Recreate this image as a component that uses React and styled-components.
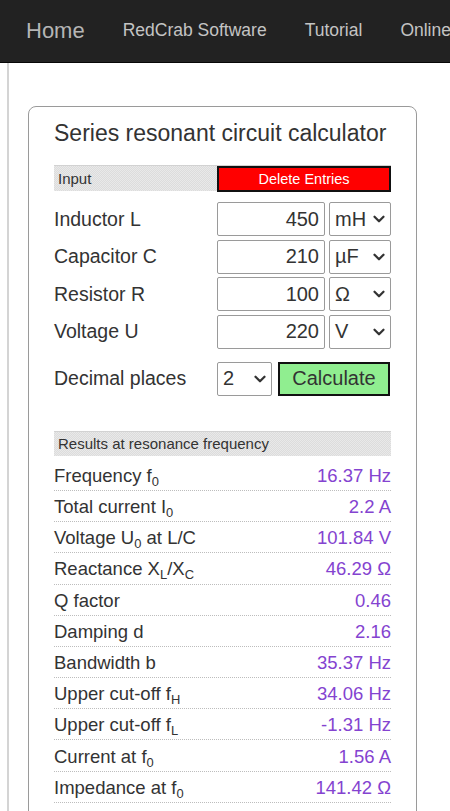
import React from 'react'
import styled, { createGlobalStyle } from 'styled-components'
import { ChevronDown } from 'lucide-react'

const GlobalStyle = createGlobalStyle`
  html, body {
    margin: 0;
    padding: 0;
    background: #fff;
    font-family: "Liberation Sans", Arial, sans-serif;
    color: #333;
  }
  * { box-sizing: border-box; }
`

const Nav = styled.nav`
  height: 63px;
  background: #222;
  border-bottom: 1px solid #080808;
  display: flex;
  align-items: center;
  gap: 38px;
  padding-left: 26px;
  overflow: hidden;
  white-space: nowrap;
`

const NavItem = styled.span`
  color: ${(p) => (p.$brand ? '#b5b5b5' : '#c4c4c4')};
  font-size: ${(p) => (p.$brand ? '22px' : '17.5px')};
  padding-bottom: 1px;
`

const Page = styled.div`
  margin-left: 7px;
  border-left: 2px solid #d4d4d4;
  padding: 43px 0 0 19px;
  min-height: 748px;
`

const Card = styled.div`
  width: 389px;
  border: 1px solid #9a9a9a;
  border-radius: 8px;
  padding: 12px 25px 40px 25px;
`

const Title = styled.h1`
  margin: 0 0 18px 0;
  font-size: 23px;
  font-weight: normal;
  line-height: 28px;
  color: #333;
  white-space: nowrap;
`

const SectionBar = styled.div`
  display: flex;
  align-items: center;
  height: ${(p) => p.$h || '26px'};
  background-color: #e3e3e3;
  background-image: repeating-conic-gradient(#dcdcdc 0 25%, #e9e9e9 0 50%);
  background-size: 2px 2px;
  border-top: 1px solid #d2d2d2;
  font-size: 15px;
  color: #333;
  margin-bottom: ${(p) => p.$mb || '0'};
  white-space: nowrap;
`

const BarLabel = styled.span`
  width: 163px;
  padding-left: 4px;
`

const DeleteButton = styled.button`
  flex: 1;
  height: 26px;
  background: #ff0000;
  border: 2px solid #111;
  color: #fff;
  font-family: inherit;
  font-size: 14.5px;
  padding: 0;
`

const InputGrid = styled.div`
  display: flex;
  flex-direction: column;
  gap: 3.6px;
  margin-top: 11px;
`

const InputRow = styled.div`
  display: grid;
  grid-template-columns: 159px 108px 62px;
  column-gap: 4px;
  align-items: center;
  height: 34px;
`

const Label = styled.span`
  font-size: 19.5px;
  color: #333;
`

const NumberInput = styled.input`
  height: 34px;
  width: 100%;
  border: 1px solid #9a9a9a;
  border-radius: 2px;
  text-align: right;
  font-family: inherit;
  font-size: 20px;
  color: #333;
  padding: 0 5px 0 4px;
`

const SelectBox = styled.div`
  height: 34px;
  border: 1px solid #9a9a9a;
  border-radius: 2px;
  display: flex;
  align-items: center;
  justify-content: space-between;
  padding: 0 2px 0 5px;
  font-size: 20px;
  color: #333;
  background: #fff;
`

const DecimalRow = styled.div`
  display: grid;
  grid-template-columns: 163px 55px 1fr;
  align-items: center;
  height: 34px;
  margin-top: 13px;
  margin-bottom: 35px;
`

const CalcButton = styled.button`
  height: 34px;
  margin-left: 6px;
  margin-right: 1px;
  background: #90ee90;
  border: 2px solid #111;
  font-family: inherit;
  font-size: 20px;
  color: #333;
  padding: 0;
`

const ResultRow = styled.div`
  display: flex;
  justify-content: space-between;
  align-items: center;
  height: 31.2px;
  border-bottom: 1px dotted #bdbdbd;
  font-size: 18.5px;
  padding-top: 2px;
`

const ResultLabel = styled.span`
  color: #333;
`

const ResultValue = styled.span`
  color: #8443d0;
`

const Sub = styled.sub`
  font-size: 0.7em;
  vertical-align: -0.3em;
  line-height: 0;
`

function Select({ value }) {
  return (
    <SelectBox>
      <span>{value}</span>
      <ChevronDown size={18} strokeWidth={3} color="#333" />
    </SelectBox>
  )
}

const inputs = [
  { label: 'Inductor L', value: '450', unit: 'mH' },
  { label: 'Capacitor C', value: '210', unit: 'µF' },
  { label: 'Resistor R', value: '100', unit: 'Ω' },
  { label: 'Voltage U', value: '220', unit: 'V' },
]

const results = [
  { label: <>Frequency f<Sub>0</Sub></>, value: '16.37 Hz' },
  { label: <>Total current I<Sub>0</Sub></>, value: '2.2 A' },
  { label: <>Voltage U<Sub>0</Sub> at L/C</>, value: '101.84 V' },
  { label: <>Reactance X<Sub>L</Sub>/X<Sub>C</Sub></>, value: '46.29 Ω' },
  { label: 'Q factor', value: '0.46' },
  { label: 'Damping d', value: '2.16' },
  { label: 'Bandwidth b', value: '35.37 Hz' },
  { label: <>Upper cut-off f<Sub>H</Sub></>, value: '34.06 Hz' },
  { label: <>Upper cut-off f<Sub>L</Sub></>, value: '-1.31 Hz' },
  { label: <>Current at f<Sub>0</Sub></>, value: '1.56 A' },
  { label: <>Impedance at f<Sub>0</Sub></>, value: '141.42 Ω' },
]

export default function App() {
  return (
    <>
      <GlobalStyle />
      <Nav>
        <NavItem $brand>Home</NavItem>
        <NavItem>RedCrab Software</NavItem>
        <NavItem>Tutorial</NavItem>
        <NavItem>Online Calculator</NavItem>
      </Nav>
      <Page>
        <Card>
          <Title>Series resonant circuit calculator</Title>

          <SectionBar>
            <BarLabel>Input</BarLabel>
            <DeleteButton>Delete Entries</DeleteButton>
          </SectionBar>

          <InputGrid>
            {inputs.map((row) => (
              <InputRow key={row.label}>
                <Label>{row.label}</Label>
                <NumberInput defaultValue={row.value} />
                <Select value={row.unit} />
              </InputRow>
            ))}
          </InputGrid>

          <DecimalRow>
            <Label>Decimal places</Label>
            <Select value="2" />
            <CalcButton>Calculate</CalcButton>
          </DecimalRow>

          <SectionBar $h="25px" $mb="4px">
            <BarLabel>Results at resonance frequency</BarLabel>
          </SectionBar>

          {results.map((r, i) => (
            <ResultRow key={i}>
              <ResultLabel>{r.label}</ResultLabel>
              <ResultValue>{r.value}</ResultValue>
            </ResultRow>
          ))}
        </Card>
      </Page>
    </>
  )
}
